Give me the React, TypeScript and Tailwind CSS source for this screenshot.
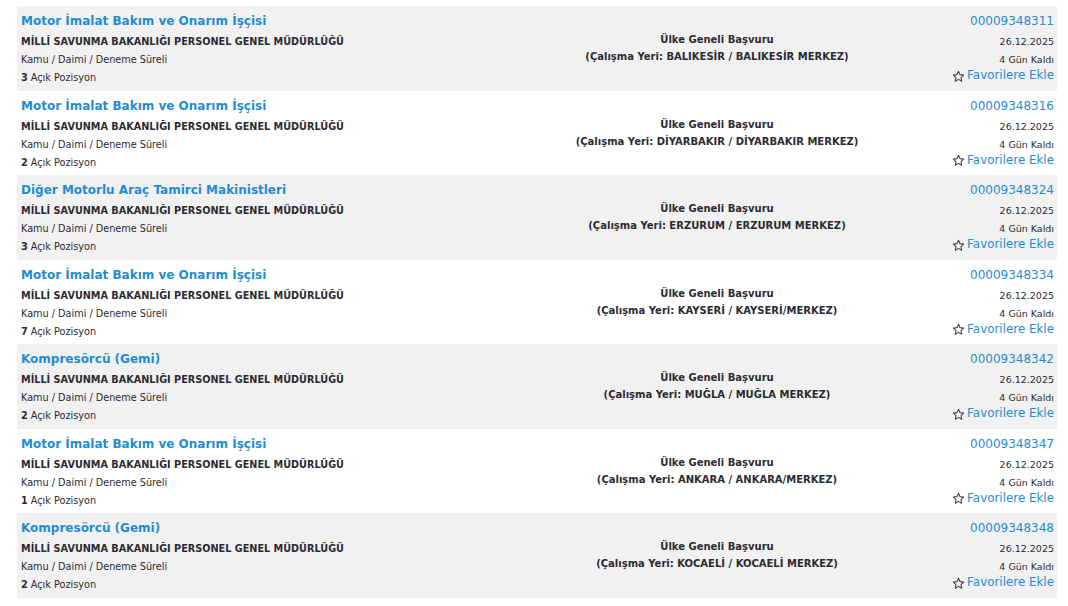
import React from 'react';

interface Ilan {
    baslik: string;
    kurum: string;
    tur: string;
    pozisyon: number;
    yer: string;
    no: string;
    tarih: string;
    kalan: string;
}

const ilanlar: Ilan[] = [
    { baslik: 'Motor İmalat Bakım ve Onarım İşçisi', kurum: 'MİLLİ SAVUNMA BAKANLIĞI PERSONEL GENEL MÜDÜRLÜĞÜ', tur: 'Kamu / Daimi / Deneme Süreli', pozisyon: 3, yer: 'BALIKESİR / BALIKESİR MERKEZ', no: '00009348311', tarih: '26.12.2025', kalan: '4 Gün Kaldı' },
    { baslik: 'Motor İmalat Bakım ve Onarım İşçisi', kurum: 'MİLLİ SAVUNMA BAKANLIĞI PERSONEL GENEL MÜDÜRLÜĞÜ', tur: 'Kamu / Daimi / Deneme Süreli', pozisyon: 2, yer: 'DİYARBAKIR / DİYARBAKIR MERKEZ', no: '00009348316', tarih: '26.12.2025', kalan: '4 Gün Kaldı' },
    { baslik: 'Diğer Motorlu Araç Tamirci Makinistleri', kurum: 'MİLLİ SAVUNMA BAKANLIĞI PERSONEL GENEL MÜDÜRLÜĞÜ', tur: 'Kamu / Daimi / Deneme Süreli', pozisyon: 3, yer: 'ERZURUM / ERZURUM MERKEZ', no: '00009348324', tarih: '26.12.2025', kalan: '4 Gün Kaldı' },
    { baslik: 'Motor İmalat Bakım ve Onarım İşçisi', kurum: 'MİLLİ SAVUNMA BAKANLIĞI PERSONEL GENEL MÜDÜRLÜĞÜ', tur: 'Kamu / Daimi / Deneme Süreli', pozisyon: 7, yer: 'KAYSERİ / KAYSERİ/MERKEZ', no: '00009348334', tarih: '26.12.2025', kalan: '4 Gün Kaldı' },
    { baslik: 'Kompresörcü (Gemi)', kurum: 'MİLLİ SAVUNMA BAKANLIĞI PERSONEL GENEL MÜDÜRLÜĞÜ', tur: 'Kamu / Daimi / Deneme Süreli', pozisyon: 2, yer: 'MUĞLA / MUĞLA MERKEZ', no: '00009348342', tarih: '26.12.2025', kalan: '4 Gün Kaldı' },
    { baslik: 'Motor İmalat Bakım ve Onarım İşçisi', kurum: 'MİLLİ SAVUNMA BAKANLIĞI PERSONEL GENEL MÜDÜRLÜĞÜ', tur: 'Kamu / Daimi / Deneme Süreli', pozisyon: 1, yer: 'ANKARA / ANKARA/MERKEZ', no: '00009348347', tarih: '26.12.2025', kalan: '4 Gün Kaldı' },
    { baslik: 'Kompresörcü (Gemi)', kurum: 'MİLLİ SAVUNMA BAKANLIĞI PERSONEL GENEL MÜDÜRLÜĞÜ', tur: 'Kamu / Daimi / Deneme Süreli', pozisyon: 2, yer: 'KOCAELİ / KOCAELİ MERKEZ', no: '00009348348', tarih: '26.12.2025', kalan: '4 Gün Kaldı' },
];

const StarIcon = () => (
    <svg className="w-[13px] h-[13px] mr-[2px]" viewBox="0 0 24 24" fill="none" stroke="#444" strokeWidth="2" strokeLinejoin="round">
        <path d="M12 2.5l2.9 6.1 6.6.8-4.9 4.6 1.3 6.6L12 17.3l-5.9 3.3 1.3-6.6-4.9-4.6 6.6-.8z" />
    </svg>
);

const App: React.FC = () => {
    return (
        <div className="min-h-[606px] bg-white pt-[6px] pl-[17px]" style={{ fontFamily: '"DejaVu Sans", Verdana, sans-serif' }}>
            <div className="w-[1040px]">
                {ilanlar.map((ilan, i) => (
                    <div
                        key={ilan.no}
                        className={`grid grid-cols-[500px_400px_140px] h-[84.5px] ${i % 2 === 0 ? 'bg-[#f1f1f1]' : 'bg-white'}`}
                    >
                        {/* Sol: başlık ve kurum */}
                        <div className="pl-[4px] pt-[5px] text-[#2b2b33]">
                            <div className="h-[21px] leading-[21px] text-[12px] font-bold text-[#1f8dd0]">{ilan.baslik}</div>
                            <div className="h-[19px] leading-[19px] text-[9.7px] font-bold">{ilan.kurum}</div>
                            <div className="h-[18px] leading-[18px] text-[9.7px]">{ilan.tur}</div>
                            <div className="h-[18px] leading-[18px] text-[9.7px]">
                                <span className="font-bold">{ilan.pozisyon}</span> Açık Pozisyon
                            </div>
                        </div>

                        {/* Orta: başvuru yeri */}
                        <div className="flex flex-col items-center justify-center text-[10px] font-bold text-[#2b2b33] leading-[17px]">
                            <div>Ülke Geneli Başvuru</div>
                            <div>(Çalışma Yeri: {ilan.yer})</div>
                        </div>

                        {/* Sağ: ilan no, tarih */}
                        <div className="flex flex-col items-end pr-[3px] pt-[5px] text-[#2b2b33]">
                            <div className="h-[22px] leading-[21px] text-[12px] text-[#1f8dd0]">{ilan.no}</div>
                            <div className="h-[18px] leading-[18px] text-[9.5px]">{ilan.tarih}</div>
                            <div className="h-[17px] leading-[17px] text-[9.5px]">{ilan.kalan}</div>
                            <div className="h-[16px] flex items-center text-[11.9px] text-[#1f8dd0]">
                                <StarIcon />
                                Favorilere Ekle
                            </div>
                        </div>
                    </div>
                ))}
            </div>
        </div>
    );
};

export default App;
